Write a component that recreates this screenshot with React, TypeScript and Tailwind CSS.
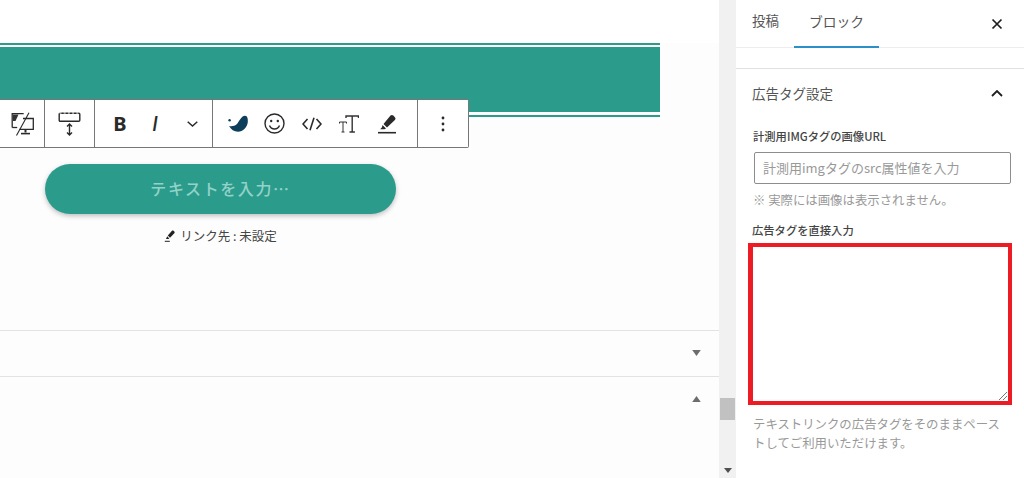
import React from "react";

function Sep() {
  return <div className="w-px self-stretch bg-[#777777]" />;
}

function Toolbar() {
  return (
    <div className="absolute left-[-1px] top-[99px] flex h-[49px] w-[470px] items-stretch rounded-r-[2px] border border-l-0 border-[#777777] bg-white text-[#1e1e1e]">
      <div className="flex w-[45px] items-center justify-center">
        <svg className="ml-[2px]" width="24" height="24" viewBox="0 0 24 24" fill="none" stroke="#2a2a2a" strokeWidth="1.3">
          <path d="M1.2 15.5V1.7h11.5" />
          <path d="M1.2 15.5h5" />
          <path d="M2 2.5h5.5L4.5 9H2z" fill="#333" stroke="none" />
          <path d="M12 6.5h10.3v10.8H8.5" />
          <path d="M14.5 17.5v3" strokeWidth="2" />
          <path d="M10 21.6h9" strokeWidth="1.6" />
          <path d="M18 .8 5.5 23.4" strokeWidth="1.1" />
        </svg>
      </div>
      <Sep />
      <div className="flex w-[49px] items-center justify-center">
        <svg width="23" height="26" viewBox="0 0 23 26" fill="none" stroke="#2a2a2a" strokeWidth="1.4">
          <rect x="1.2" y="2.2" width="20.6" height="8" rx="1" />
          <path d="M1.5 2h20" strokeDasharray="2 2.2" stroke="#fff" strokeWidth="1" />
          <path d="M11.5 13.5v10M9 15.5 11.5 13l2.5 2.5M9 21.5 11.5 24l2.5-2.5" />
        </svg>
      </div>
      <Sep />
      <div className="flex w-[117px] items-center">
        <span className="ml-[18px] w-[14px] text-center text-[20px] font-bold font-['Noto_Sans',sans-serif] leading-none text-[#2a2a2a]">B</span>
        <span className="ml-[23px] w-[10px] text-center text-[20px] font-medium italic font-['Inter',sans-serif] leading-none text-[#2a2a2a]">I</span>
        <svg className="ml-[27px]" width="11" height="6" viewBox="0 0 11 6" fill="none" stroke="#2a2a2a" strokeWidth="1.5">
          <path d="M.7.8 5.5 5l4.8-4.2" />
        </svg>
      </div>
      <Sep />
      <div className="relative flex w-[204px] items-center">
        <svg className="ml-[15px]" width="20" height="17" viewBox="0 0 20 17">
          <circle cx="1.6" cy="5.2" r="1.2" fill="#0d3f5a" />
          <path d="M1 11C4 11.500 7 11 9 9 11 7 13 1 17 .8 19.500.7 20 4 19.800 7 19.500 12 15 16.700 10 16.700 6 16.700 3 14.500 1 11z" fill="#0d3f5a" />
        </svg>
        <svg className="ml-[16px]" width="21" height="21" viewBox="0 0 21 21" fill="none" stroke="#2a2a2a" strokeWidth="1.4">
          <circle cx="10.500" cy="10.500" r="9.500" />
          <circle cx="7.200" cy="8" r="1.200" fill="#2a2a2a" stroke="none" />
          <circle cx="13.800" cy="8" r="1.200" fill="#2a2a2a" stroke="none" />
          <path d="M5.500 12.500c1 2.500 3 3.500 5 3.500s4-1 5-3.500" />
        </svg>
        <svg className="ml-[17px]" width="20" height="14" viewBox="0 0 20 14" fill="none" stroke="#2a2a2a" strokeWidth="1.6">
          <path d="M5.500 2 1 7l4.500 5M14.500 2 19 7l-4.500 5M12 .8 8 13.200" />
        </svg>
        <svg className="ml-[17px]" width="20" height="18" viewBox="0 0 20 18" fill="none" stroke="#333" strokeWidth="1">
          <path d="M.5 8.500v-1.500h7v1.500M4 7v10M2.500 17h3" />
          <path d="M7 3V1h12.500v2M13.200 1v16M10.500 17h5.400" strokeWidth="1.400" />
        </svg>
        <svg className="ml-[18px]" width="20" height="20" viewBox="0 0 20 20">
          <path d="M13.500 1.500c1-.8 2-.7 2.800.1l1.600 1.600c.8.8.8 1.900 0 2.700L10 13.500 6.500 10z" fill="#2a2a2a" />
          <path d="M5.500 11 9 14.500l-1.500.8H3.200l1.800-2z" fill="#2a2a2a" />
          <path d="M1 18.700h18" stroke="#2a2a2a" strokeWidth="1.600" />
        </svg>
      </div>
      <Sep />
      <div className="flex flex-1 items-center justify-center">
        <svg width="4" height="16" viewBox="0 0 4 16" fill="#2a2a2a">
          <circle cx="2" cy="2" r="1.400" />
          <circle cx="2" cy="8" r="1.400" />
          <circle cx="2" cy="14" r="1.400" />
        </svg>
      </div>
    </div>
  );
}

function Editor() {
  return (
    <div className="relative flex h-[478px] w-[719px] shrink-0 flex-col bg-[#fdfdfd]">
      <div className="h-[43px] shrink-0 bg-white" />
      <div className="flex h-[74px] w-[660px] shrink-0 flex-col">
        <div className="h-[2px] bg-[#2b9c8c]" />
        <div className="h-[2px] bg-white" />
        <div className="h-[65px] bg-[#2b9c8c]" />
        <div className="h-[3px] bg-white" />
        <div className="h-[2px] bg-[#2b9c8c]" />
      </div>
      <Toolbar />
      <div className="ml-[45px] mt-[47px] flex h-[50px] w-[351px] shrink-0 items-center justify-center rounded-full bg-[#2b9c8c] pb-[2px] text-[16px] font-medium tracking-[1.6px] text-[#93d2c8] shadow-[0_2px_5px_rgba(0,0,0,0.25)] font-['Noto_Sans_CJK_JP',sans-serif]">
        テキストを入力…
      </div>
      <div className="ml-[45px] mt-[14px] flex h-[16px] w-[351px] shrink-0 items-center justify-center gap-[4px] text-[12.500px] text-[#444] font-['Noto_Sans_CJK_JP',sans-serif]">
        <svg width="12" height="12" viewBox="0 0 12 12">
          <path d="M8 .8c.6-.4 1.200-.4 1.700.1l.6.6c.5.5.5 1.200 0 1.700L6 7.800 3.800 5.600z" fill="#222" />
          <path d="M3.200 6.300 5.300 8.400l-1 .5H2z" fill="#222" />
          <path d="M.8 11.300h5" stroke="#222" strokeWidth="1" />
        </svg>
        <span>リンク先 : 未設定</span>
      </div>
      <div className="mt-[86px] flex h-[47px] shrink-0 items-center justify-end border-y border-[#e3e3e3] pb-[2px] pr-[18px]">
        <svg width="9" height="6" viewBox="0 0 10 7" fill="#6d6d6d"><path d="M0 0h10L5 7z" /></svg>
      </div>
      <div className="flex h-[44px] shrink-0 items-center justify-end pr-[18px]">
        <svg width="9" height="6" viewBox="0 0 10 7" fill="#6d6d6d"><path d="M0 7h10L5 0z" /></svg>
      </div>
    </div>
  );
}

function Scrollbar() {
  return (
    <div className="flex h-[478px] w-[17px] shrink-0 flex-col items-center bg-[#f1f1f1]">
      <div className="mt-[398px] h-[22px] w-[15px] bg-[#c1c1c1]" />
      <svg className="mt-[48px]" width="8" height="5" viewBox="0 0 8 5" fill="#505050"><path d="M0 0h8L4 5z" /></svg>
    </div>
  );
}

function Sidebar() {
  return (
    <div className="flex h-[478px] min-w-0 flex-1 flex-col bg-white text-[#1e1e1e] font-['Noto_Sans_CJK_JP',sans-serif]">
      <div className="flex h-[48px] shrink-0 border-b border-[#ededed]">
        <div className="ml-[16px] flex h-[47px] items-center pb-[6px] text-[13.500px] text-[#555]">投稿</div>
        <div className="ml-[15px] flex h-[48px] w-[85px] items-center justify-center border-b-2 border-[#2b8fc8] pb-[3px] text-[13.800px] text-[#555]">ブロック</div>
        <div className="ml-auto mr-[21px] flex h-[47px] items-center">
          <svg width="12" height="12" viewBox="0 0 12 12" fill="none" stroke="#1e1e1e" strokeWidth="1.700"><path d="M1.500 1.500l9 9M10.500 1.500l-9 9" /></svg>
        </div>
      </div>
      <div className="mt-[20px] flex h-[52px] shrink-0 items-center justify-between border-t border-[#e0e0e0] pb-[2px] pl-[16px] pr-[21px]">
        <span className="text-[13.500px] text-[#555]">広告タグ設定</span>
        <svg width="12" height="7" viewBox="0 0 12 7" fill="none" stroke="#1e1e1e" strokeWidth="1.800"><path d="M1 6l5-5 5 5" /></svg>
      </div>
      <div className="ml-[17px] mt-[7px] h-[18px] text-[11.300px] font-medium leading-[18px] text-[#444]">計測用IMGタグの画像URL</div>
      <div className="ml-[18px] mt-[7px] flex h-[32px] w-[257px] shrink-0 items-center rounded-[2px] border border-[#8d8d8d] pl-[8px] text-[13px] text-[#999]">
        計測用imgタグのsrc属性値を入力
      </div>
      <div className="ml-[17px] mt-[7px] h-[18px] text-[12.400px] leading-[18px] text-[#999]">※ 実際には画像は表示されません。</div>
      <div className="ml-[16px] mt-[12px] h-[18px] text-[11.300px] font-medium leading-[18px] text-[#444]">広告タグを直接入力</div>
      <div className="relative ml-[12px] mt-[4px] h-[162px] w-[264px] shrink-0 border-[4px] border-l-[5px] border-[#ed1c24] bg-white">
        <svg className="absolute bottom-0 right-0" width="10" height="10" viewBox="0 0 10 10" fill="none" stroke="#777" strokeWidth="1"><path d="M1 9 9 1M5 9l4-4" /></svg>
      </div>
      <div className="ml-[17px] mt-[10px] w-[256px] text-[12.400px] leading-[19px] text-[#999]">テキストリンクの広告タグをそのままペーストしてご利用いただけます。</div>
    </div>
  );
}

export default function App() {
  return (
    <div className="flex h-[478px] w-[1024px] overflow-hidden bg-white">
      <Editor />
      <Scrollbar />
      <Sidebar />
    </div>
  );
}
